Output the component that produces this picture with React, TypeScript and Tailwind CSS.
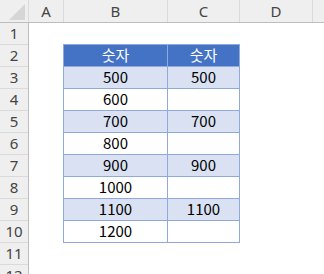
import React from "react";

const rows: [string, string][] = [
  ["500", "500"],
  ["600", ""],
  ["700", "700"],
  ["800", ""],
  ["900", "900"],
  ["1000", ""],
  ["1100", "1100"],
  ["1200", ""],
];

const hdrFont = { fontFamily: '"Noto Sans", "Open Sans", sans-serif' };
const bodyFont = { fontFamily: '"Noto Sans CJK KR", "Noto Sans", sans-serif' };

export default function App() {
  return (
    <div className="w-[324px] h-[274px] overflow-hidden bg-white relative">
      {/* column header */}
      <div className="flex h-[23px] bg-[#efefef] border-b border-[#bdbdbd] text-[15px] text-[#444]" style={hdrFont}>
        <div className="w-[29px] shrink-0 border-r border-[#dadada] relative">
          <svg width="16" height="16" className="absolute right-[3px] bottom-[2px]">
            <polygon points="16,0 16,16 0,16" fill="#d6d6d6" />
          </svg>
        </div>
        <div className="w-[35px] shrink-0 border-r border-[#dadada] flex items-center justify-center">A</div>
        <div className="w-[104px] shrink-0 border-r border-[#dadada] flex items-center justify-center">B</div>
        <div className="w-[72px] shrink-0 border-r border-[#dadada] flex items-center justify-center">C</div>
        <div className="w-[73px] shrink-0 border-r border-[#dadada] flex items-center justify-center">D</div>
        <div className="flex-1" />
      </div>
      <div className="flex">
        {/* row header */}
        <div className="w-[29px] shrink-0 bg-[#efefef] border-r border-[#bdbdbd] text-[15px] text-[#444]" style={hdrFont}>
          {Array.from({ length: 12 }, (_, i) => (
            <div key={i} className="h-[22px] border-b border-[#dadada] flex items-center justify-center">
              {i + 1}
            </div>
          ))}
        </div>
        {/* sheet content */}
        <div className="flex-1 pl-[34px] pt-[21px]">
          <div className="w-[177px] border-t border-l border-[#8ea9db] text-[15px]" style={bodyFont}>
            <div className="flex h-[22px] bg-[#4472c4] text-white">
              <div className="w-[104px] border-r border-b border-[#8ea9db] flex items-center justify-center">숫자</div>
              <div className="w-[72px] border-r border-b border-[#8ea9db] flex items-center justify-center">숫자</div>
            </div>
            {rows.map(([b, c], i) => (
              <div key={i} className={`flex h-[22px] text-black ${i % 2 === 0 ? "bg-[#d9e1f2]" : "bg-white"}`}>
                <div className="w-[104px] border-r border-b border-[#8ea9db] flex items-center justify-center">{b}</div>
                <div className="w-[72px] border-r border-b border-[#8ea9db] flex items-center justify-center">{c}</div>
              </div>
            ))}
          </div>
        </div>
      </div>
    </div>
  );
}
